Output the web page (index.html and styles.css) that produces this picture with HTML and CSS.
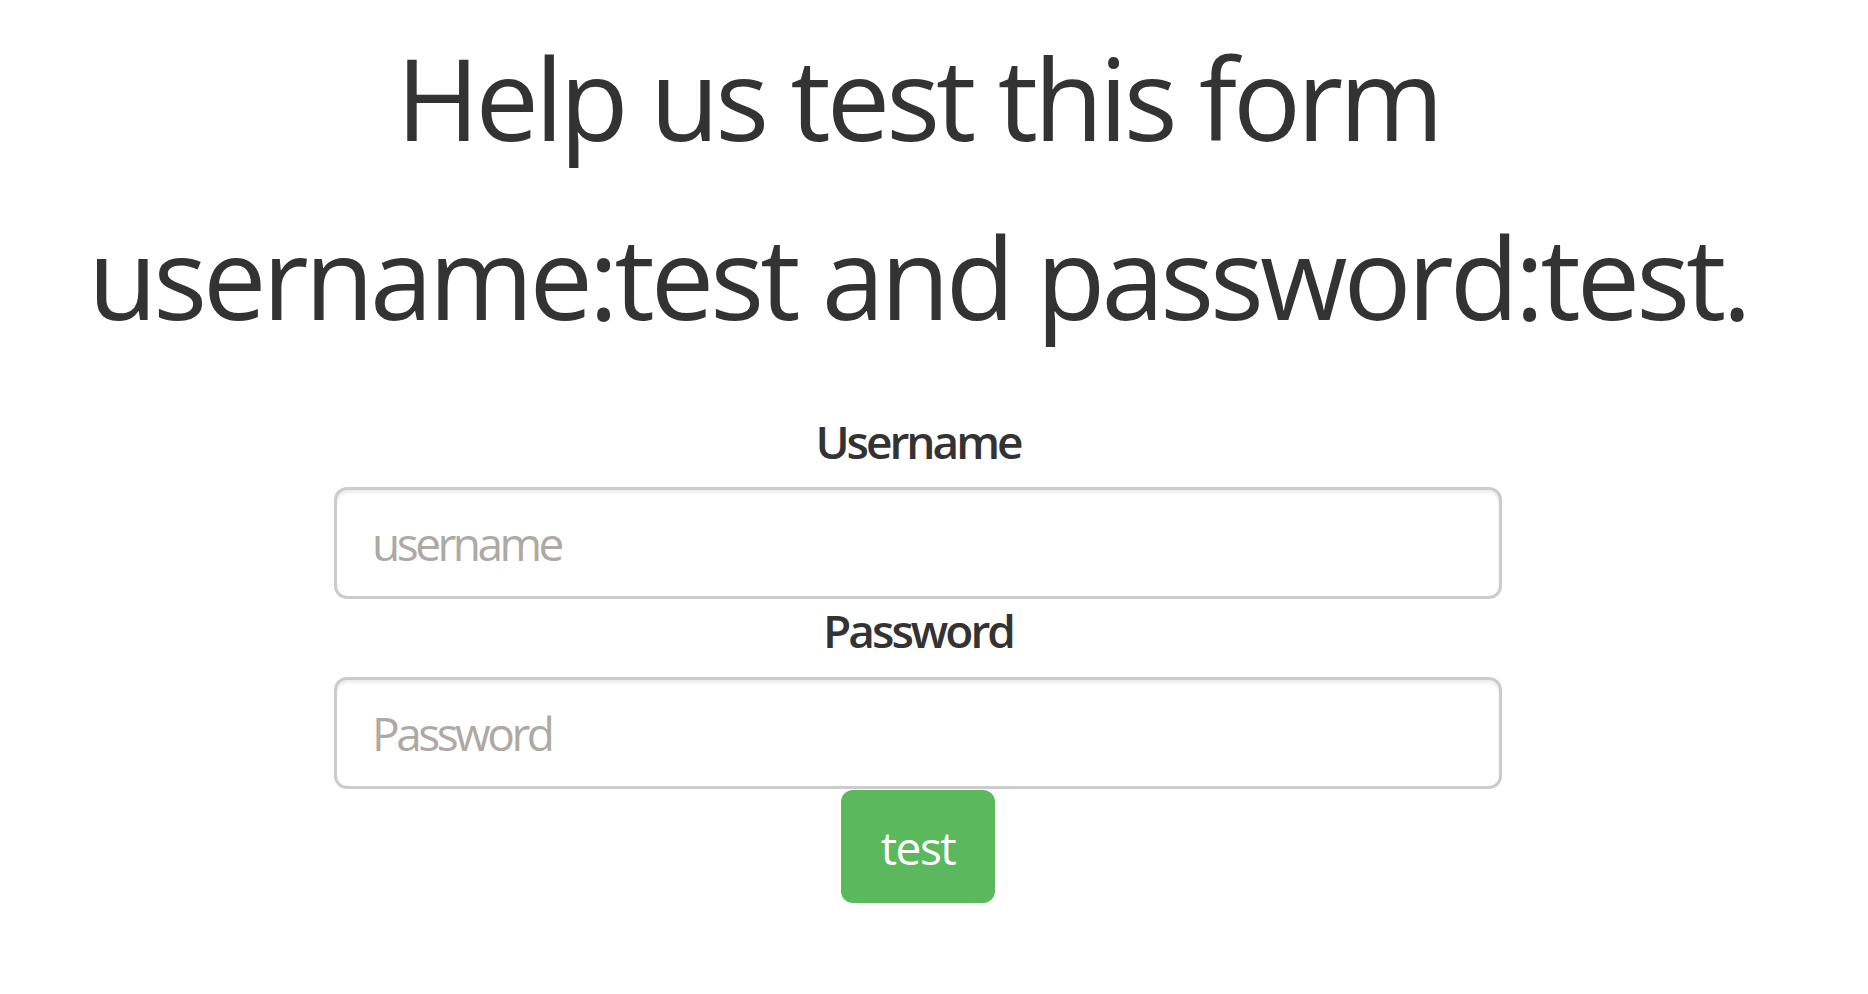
FILE: index.html
```html
<!DOCTYPE html>
<html lang="en">
<head>
<meta charset="utf-8">
<title>Help us test this form</title>
<link rel="stylesheet" href="styles.css">
</head>
<body>
<main class="page">
  <h1 class="title">Help us test this form</h1>
  <h1 class="title">username:test and password:test.</h1>
  <form class="login">
    <label class="field-label" for="u">Username</label>
    <input class="field-input" id="u" type="text" placeholder="username">
    <label class="field-label second" for="p">Password</label>
    <input class="field-input" id="p" type="password" placeholder="Password">
    <button class="btn-test" type="button">test</button>
  </form>
</main>
</body>
</html>
```
FILE: styles.css
```css
html, body {
  margin: 0;
  padding: 0;
  background: #fff;
}
body {
  font-family: "Open Sans", "Noto Sans", sans-serif;
  color: #333;
}
.page {
  width: 1836px;
  padding-top: 8px;
  display: flex;
  flex-direction: column;
  align-items: center;
}
.title {
  margin: 0;
  font-weight: 400;
  font-size: 113px;
  line-height: 179px;
  letter-spacing: -4px;
  text-align: center;
  white-space: nowrap;
}
.login {
  margin-top: 45px;
  width: 1168px;
  display: flex;
  flex-direction: column;
  align-items: center;
}
.field-label {
  font-size: 46px;
  font-weight: 600;
  letter-spacing: -3px;
  line-height: 60px;
  margin-bottom: 16px;
}
.field-label.second {
  margin-top: 1px;
  margin-bottom: 17px;
}
.field-input {
  box-sizing: border-box;
  width: 100%;
  height: 112px;
  border: 3px solid #ccc;
  border-radius: 13px;
  padding: 0 35px;
  font-family: inherit;
  font-size: 46px;
  letter-spacing: -3.5px;
  color: #555;
  background: #fff;
  box-shadow: inset 0 3px 3px rgba(0,0,0,0.075);
  outline: none;
}
.field-input::placeholder {
  color: #aea9a2;
}
.btn-test {
  margin-top: 1px;
  width: 154px;
  height: 113px;
  border: none;
  border-radius: 12px;
  background: #5cb85c;
  color: #fff;
  font-family: inherit;
  font-size: 46px;
  letter-spacing: -1.5px;
  padding: 0;
}
```
